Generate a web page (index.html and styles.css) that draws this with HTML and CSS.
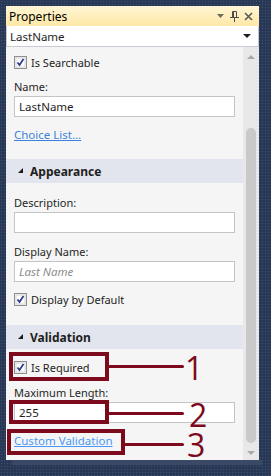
FILE: index.html
```html
<!DOCTYPE html>
<html lang="en">
<head>
    <meta charset="UTF-8">
    <title>Properties</title>
    <link rel="stylesheet" href="styles.css">
</head>
<body>
    <div class="panel">
        <div class="titlebar">
            <span class="title">Properties</span>
            <div class="title-tools">
                <svg width="8" height="5" viewBox="0 0 8 5"><polygon points="0,0 7,0 3.5,4" fill="#6f6a5c"/></svg>
                <svg width="9" height="11" viewBox="0 0 9 11">
                    <path d="M2.5 0.5h4v6h-4z M3.5 1v5" fill="none" stroke="#4b4b4b" stroke-width="1"/>
                    <path d="M0 6.5h9 M4.5 7v4" stroke="#4b4b4b" stroke-width="1"/>
                </svg>
                <svg width="9" height="9" viewBox="0 0 9 9"><path d="M1 1l7 7 M8 1l-7 7" stroke="#5a5a5a" stroke-width="1.6"/></svg>
            </div>
        </div>

        <div class="selector">
            <span>LastName</span>
            <svg width="8" height="5" viewBox="0 0 8 5"><polygon points="0,0 8,0 4,4" fill="#1e1e1e"/></svg>
        </div>

        <div class="body">
            <div class="props">
                <div class="section">
                    <label class="check-row first">
                        <svg class="checkbox" width="13" height="13" viewBox="0 0 13 13">
                            <rect x="0.5" y="0.5" width="12" height="12" fill="#f4f4f4" stroke="#8f8f8f"/>
                            <rect x="2" y="2" width="9" height="9" fill="#fff" stroke="#d5d5d5"/>
                            <path d="M3.5 6.5l2 2.5l4-6" fill="none" stroke="#2f3b8f" stroke-width="1.8"/>
                        </svg>
                        <span>Is Searchable</span>
                    </label>
                    <div class="field-label gap-9">Name:</div>
                    <div class="text-box">LastName</div>
                    <a class="link link-choice" href="#">Choice List...</a>
                </div>

                <div class="group-header header-appearance">
                    <svg width="6" height="6" viewBox="0 0 6 6"><polygon points="5,0 5,5 0,5" fill="#1a1a1a"/></svg>
                    <span>Appearance</span>
                </div>
                <div class="section">
                    <div class="field-label gap-12">Description:</div>
                    <div class="text-box"></div>
                    <div class="field-label gap-11">Display Name:</div>
                    <div class="text-box placeholder">Last Name</div>
                    <label class="check-row gap-9">
                        <svg class="checkbox" width="13" height="13" viewBox="0 0 13 13">
                            <rect x="0.5" y="0.5" width="12" height="12" fill="#f4f4f4" stroke="#8f8f8f"/>
                            <rect x="2" y="2" width="9" height="9" fill="#fff" stroke="#d5d5d5"/>
                            <path d="M3.5 6.5l2 2.5l4-6" fill="none" stroke="#2f3b8f" stroke-width="1.8"/>
                        </svg>
                        <span>Display by Default</span>
                    </label>
                </div>

                <div class="group-header header-validation">
                    <svg width="6" height="6" viewBox="0 0 6 6"><polygon points="5,0 5,5 0,5" fill="#1a1a1a"/></svg>
                    <span>Validation</span>
                </div>
                <div class="section">
                    <label class="check-row gap-10">
                        <svg class="checkbox" width="13" height="13" viewBox="0 0 13 13">
                            <rect x="0.5" y="0.5" width="12" height="12" fill="#f4f4f4" stroke="#8f8f8f"/>
                            <rect x="2" y="2" width="9" height="9" fill="#fff" stroke="#d5d5d5"/>
                            <path d="M3.5 6.5l2 2.5l4-6" fill="none" stroke="#2f3b8f" stroke-width="1.8"/>
                        </svg>
                        <span>Is Required</span>
                    </label>
                    <div class="field-label gap-10">Maximum Length:</div>
                    <div class="text-box">255</div>
                    <a class="link link-custom" href="#">Custom Validation</a>
                </div>
            </div>

            <div class="scrollbar">
                <div class="scroll-btn scroll-up">
                    <svg width="8" height="5" viewBox="0 0 8 5"><polygon points="0,4 8,4 4,0" fill="#a8a8a8"/></svg>
                </div>
                <div class="scroll-track">
                    <div class="scroll-thumb"></div>
                </div>
                <div class="scroll-btn scroll-down">
                    <svg width="8" height="5" viewBox="0 0 8 5"><polygon points="0,0 8,0 4,4" fill="#a8a8a8"/></svg>
                </div>
            </div>
        </div>
    </div>
    <div class="under-strip"></div>

    <!-- callouts drawn over the panel -->
    <div class="callout box-1"></div>
    <div class="callout-line line-1"></div>
    <span class="callout-num num-1">1</span>

    <div class="callout box-2"></div>
    <div class="callout-line line-2"></div>
    <span class="callout-num num-2">2</span>

    <div class="callout box-3"></div>
    <div class="callout-line line-3"></div>
    <span class="callout-num num-3">3</span>
</body>
</html>
```

FILE: styles.css
```css
body {
    margin: 0;
    width: 271px;
    height: 476px;
    overflow: hidden;
    position: relative;
    font-family: "Noto Sans", "Open Sans", sans-serif;
    font-size: 11px;
    color: #1e1e1e;
    background-color: #293955;
    background-image: radial-gradient(#3d5277 0.7px, transparent 1px);
    background-size: 3px 3px;
}

.panel {
    margin: 6px 0 0 6px;
    width: 253px;
    height: 454px;
    display: flex;
    flex-direction: column;
    background-color: #f5f5f5;
}

.titlebar {
    height: 20px;
    display: flex;
    align-items: center;
    justify-content: space-between;
    padding: 0 6px 0 3px;
    background: linear-gradient(#fff6d6, #ffe8a6);
    font-size: 12px;
    color: #000;
}

.title-tools {
    display: flex;
    align-items: center;
    gap: 5px;
}

.selector {
    height: 21px;
    box-sizing: border-box;
    display: flex;
    align-items: center;
    justify-content: space-between;
    padding: 0 7px 0 3px;
    background-color: #fff;
    border: 1px solid #c7cbd3;
    border-top: none;
    font-size: 11.5px;
}

.body {
    flex: 1;
    display: flex;
    min-height: 0;
}

.props {
    flex: 1;
    padding-top: 7px;
}

.section {
    padding: 0 8px;
    display: flex;
    flex-direction: column;
    align-items: flex-start;
}

.check-row {
    height: 16px;
    display: flex;
    align-items: center;
    gap: 4px;
}

.checkbox {
    display: block;
}

.field-label {
    height: 16px;
    line-height: 16px;
}

.gap-9 { margin-top: 9px; }
.gap-10 { margin-top: 10px; }
.gap-11 { margin-top: 11px; }
.gap-12 { margin-top: 12px; }

.text-box {
    width: 221px;
    height: 21px;
    box-sizing: border-box;
    margin-top: 1px;
    padding-left: 4px;
    line-height: 19px;
    background-color: #fff;
    border: 1px solid #c4c4c4;
    font-size: 11.5px;
}

.placeholder {
    color: #8d8d8d;
    font-style: italic;
}

.link {
    height: 16px;
    line-height: 16px;
    margin-top: 10px;
    color: #3b82dc;
    font-size: 11.5px;
}

.link-custom {
    color: #4a98f5;
}

.group-header {
    height: 24px;
    display: flex;
    align-items: center;
    gap: 6px;
    padding-left: 12px;
    background-color: #e2e5ed;
    font-weight: bold;
    font-size: 12px;
}

.header-appearance { margin-top: 16px; }
.header-validation { margin-top: 18px; }

.scrollbar {
    width: 16px;
    display: flex;
    flex-direction: column;
    background-color: #e8e8e8;
}

.scroll-btn {
    display: flex;
    justify-content: center;
}

.scroll-up {
    height: 20px;
    align-items: center;
}

.scroll-down {
    height: 14px;
    align-items: center;
}

.scroll-track {
    flex: 1;
    display: flex;
    justify-content: center;
}

.scroll-thumb {
    width: 10px;
    height: 315px;
    margin-top: 61px;
    border-radius: 5px;
    background-color: #c9c9c9;
}

.under-strip {
    margin: 0 0 0 12px;
    width: 250px;
    height: 5px;
    background-color: #3a4a66;
}

.callout {
    position: absolute;
    box-sizing: border-box;
    border: 4px solid #7c0a1c;
}

.box-1 { left: 9px; top: 352px; width: 100px; height: 29px; }
.box-2 { left: 9px; top: 400px; width: 100px; height: 24px; }
.box-3 { left: 7px; top: 429px; width: 118px; height: 26px; }

.callout-line {
    position: absolute;
    height: 3px;
    border-radius: 2px;
    background-color: #7c0a1c;
}

.line-1 { left: 108px; top: 365px; width: 76px; }
.line-2 { left: 108px; top: 412px; width: 76px; }
.line-3 { left: 124px; top: 443px; width: 60px; }

.callout-num {
    position: absolute;
    font-family: "Open Sans", sans-serif;
    font-size: 32px;
    line-height: 24px;
    color: #7c0a1c;
}

.num-1 { left: 185px; top: 356px; }
.num-2 { left: 189px; top: 403px; }
.num-3 { left: 187px; top: 433px; }
```
